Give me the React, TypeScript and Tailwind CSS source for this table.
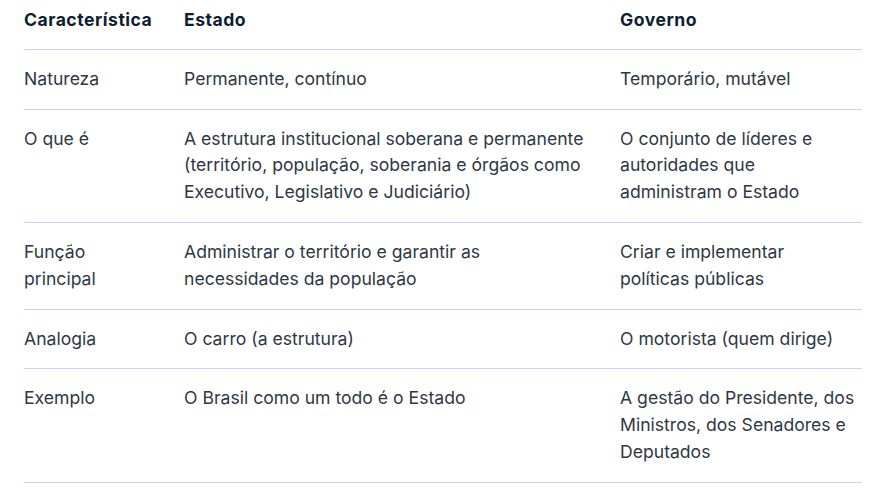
const rows = [
  {
    label: "Natureza",
    estado: "Permanente, contínuo",
    governo: "Temporário, mutável",
  },
  {
    label: "O que é",
    estado:
      "A estrutura institucional soberana e permanente (território, população, soberania e órgãos como Executivo, Legislativo e Judiciário)",
    governo: "O conjunto de líderes e autoridades que administram o Estado",
  },
  {
    label: "Função principal",
    estado: "Administrar o território e garantir as necessidades da população",
    governo: "Criar e implementar políticas públicas",
  },
  {
    label: "Analogia",
    estado: "O carro (a estrutura)",
    governo: "O motorista (quem dirige)",
  },
  {
    label: "Exemplo",
    estado: "O Brasil como um todo é o Estado",
    governo: "A gestão do Presidente, dos Ministros, dos Senadores e Deputados",
  },
];

export default function App() {
  return (
    <div className="w-[886px] h-[492px] bg-white pl-6 font-['Inter',sans-serif] text-[17.6px] leading-[26.8px] text-[#2e3744] overflow-hidden">
      <table className="w-[838px] border-collapse table-fixed">
        <colgroup>
          <col className="w-[160px]" />
          <col className="w-[436px]" />
          <col />
        </colgroup>
        <thead>
          <tr className="border-b border-[#bfd7f8]">
            <th className="pt-[7px] pb-[15px] pr-4 text-left font-bold tracking-[0.5px] text-[#0f1e33]">Característica</th>
            <th className="pt-[7px] pb-[15px] pr-4 text-left font-bold tracking-[0.5px] text-[#0f1e33]">Estado</th>
            <th className="pt-[7px] pb-[15px] text-left font-bold tracking-[0.5px] text-[#0f1e33]">Governo</th>
          </tr>
        </thead>
        <tbody>
          {rows.map((r) => (
            <tr key={r.label} className="border-b border-[#bfd7f8] align-top">
              <td className="py-4 pr-6">{r.label}</td>
              <td className="py-4 pr-6">{r.estado}</td>
              <td className="py-4 pr-1">{r.governo}</td>
            </tr>
          ))}
        </tbody>
      </table>
    </div>
  );
}
